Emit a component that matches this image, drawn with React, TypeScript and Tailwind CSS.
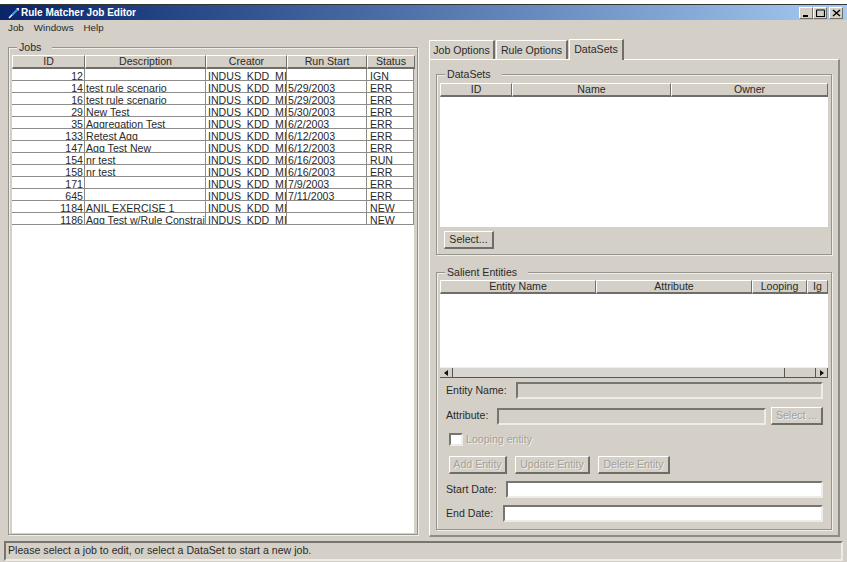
import React from "react";

const jobs = [
  ["12", "", "", "IGN"],
  ["14", "test rule scenario", "5/29/2003", "ERR"],
  ["16", "test rule scenario", "5/29/2003", "ERR"],
  ["29", "New Test", "5/30/2003", "ERR"],
  ["35", "Aggregation Test", "6/2/2003", "ERR"],
  ["133", "Retest Agg", "6/12/2003", "ERR"],
  ["147", "Agg Test New", "6/12/2003", "ERR"],
  ["154", "nr test", "6/16/2003", "RUN"],
  ["158", "nr test", "6/16/2003", "ERR"],
  ["171", "", "7/9/2003", "ERR"],
  ["645", "", "7/11/2003", "ERR"],
  ["1184", "ANIL EXERCISE 1", "", "NEW"],
  ["1186", "Agg Test w/Rule Constraints", "", "NEW"],
];

const raised = "border border-t-white border-l-white border-r-[#6f6d68] border-b-[#6f6d68]";
const sunken = "border-2 border-t-[#77756f] border-l-[#77756f] border-r-[#eeece8] border-b-[#eeece8]";
const dimmed = "text-[#a3a19b] [text-shadow:1px_1px_0_#f0eee8]";

function HeaderCell({ label, width }: { label: string; width: string }) {
  return (
    <div className={`${width} h-[14px] pt-[1px] shrink-0 flex items-center justify-center overflow-hidden whitespace-nowrap ${raised} border-b-2`}>
      {label}
    </div>
  );
}

function Group({ title, className, children }: { title: string; className: string; children: React.ReactNode }) {
  return (
    <fieldset className={`border border-[#96948e] shadow-[inset_1px_1px_0_#f0eee8,1px_1px_0_#f0eee8] min-w-0 ${className}`}>
      <legend className="ml-[5px] pl-[2px] pr-[11px] h-[12px] leading-[12px] bg-[#d4d0c8] text-[#2a2a2a]">{title}</legend>
      {children}
    </fieldset>
  );
}

function Btn({ label, width, disabled }: { label: string; width: string; disabled?: boolean }) {
  return (
    <button className={`${width} h-[18px] flex items-center justify-center shrink-0 ${raised} border-r-2 border-b-2 ${disabled ? dimmed : "text-[#2a2a2a]"}`}>
      {label}
    </button>
  );
}

function Arrow({ dir }: { dir: "left" | "right" }) {
  return (
    <svg width="4" height="6" viewBox="0 0 4 6">
      <path d={dir === "left" ? "M4 0 V6 L0 3 Z" : "M0 0 V6 L4 3 Z"} fill="#111" />
    </svg>
  );
}

export default function App() {
  return (
    <div className="w-[847px] h-[562px] bg-[#d4d0c8] flex flex-col overflow-hidden text-[10.6px] text-[#2a2a2a] font-['Liberation_Sans',Arial,sans-serif]">
      <div className="h-[4px] bg-white shrink-0" />
      <div className="h-[1px] bg-[#333] shrink-0" />
      <div className="h-[15px] shrink-0 flex items-center justify-between bg-gradient-to-r from-[#0a246a] to-[#a6caf0] pl-[8px] pr-[4px]">
        <div className="flex items-center gap-[1px] text-white font-bold text-[10px]">
          <svg width="12" height="12" viewBox="0 0 12 12">
            <path d="M1 11 L6 6" stroke="#ffffff" strokeWidth="1.5" />
            <path d="M4 8 L10 2" stroke="#3f9be8" strokeWidth="2" />
            <path d="M8 1 L11 1 L11 4 Z" fill="#e8e8f0" />
          </svg>
          <span>Rule Matcher Job Editor</span>
        </div>
        <div className="flex items-center">
          {["min", "max", "close"].map((k, i) => (
            <div key={k} className={`w-[14px] h-[12px] bg-[#d4d0c8] flex items-center justify-center ${raised} ${i === 2 ? "ml-[2px]" : ""}`}>
              <svg width="9" height="8" viewBox="0 0 9 8">
                {k === "min" && <path d="M1 7 H6" stroke="#000" strokeWidth="2" />}
                {k === "max" && <path d="M0.5 1 H8.5 M0.5 1 V7.5 H8.5 V1" stroke="#000" fill="none" strokeWidth="1.2" />}
                {k === "close" && <path d="M1 1 L8 7 M8 1 L1 7" stroke="#000" strokeWidth="1.5" />}
              </svg>
            </div>
          ))}
        </div>
      </div>
      <div className="h-[16px] shrink-0 flex items-center gap-[10px] pl-[8px] text-[9.8px]">
        <span>Job</span>
        <span>Windows</span>
        <span>Help</span>
      </div>

      <div className="flex-1 flex min-h-0">
        <Group title="Jobs" className="ml-[8px] mt-[5px] w-[410px] h-[494px] px-[3px] flex flex-col">
          <div className="flex-1 bg-white mt-[2px] mb-[1px] flex flex-col">
            <div className="flex bg-[#d4d0c8]">
              <HeaderCell label="ID" width="w-[73px]" />
              <HeaderCell label="Description" width="w-[121px]" />
              <HeaderCell label="Creator" width="w-[81px]" />
              <HeaderCell label="Run Start" width="w-[80px]" />
              <HeaderCell label="Status" width="w-[48px]" />
            </div>
            {jobs.map((j) => (
              <div key={j[0]} className="flex h-[12px] shrink-0 border-b border-[#8e8c88] leading-[15px] whitespace-nowrap overflow-hidden">
                <div className="w-[73px] shrink-0 text-right pr-[1px] border-r border-[#8e8c88]">{j[0]}</div>
                <div className="w-[121px] shrink-0 pl-[1px] overflow-hidden border-r border-[#8e8c88]">{j[1]}</div>
                <div className="w-[81px] shrink-0 pl-[2px] overflow-hidden border-r border-[#8e8c88] whitespace-pre">INDUS  KDD  MI</div>
                <div className="w-[80px] shrink-0 pl-[1px] border-r border-[#8e8c88]">{j[2]}</div>
                <div className="w-[47px] shrink-0 pl-[3px] border-r border-[#8e8c88]">{j[3]}</div>
              </div>
            ))}
          </div>
        </Group>

        <div className="ml-[11px] mt-[2px] w-[411px] flex flex-col">
          <div className="flex h-[21px] items-end gap-[1px] shrink-0">
            <div className="w-[66px] h-[19px] pt-[1px] flex items-center justify-center border border-t-white border-l-white border-r-2 border-r-[#6f6d68] border-b-0">Job Options</div>
            <div className="w-[72px] h-[19px] pt-[1px] flex items-center justify-center border border-t-white border-l-white border-r-2 border-r-[#6f6d68] border-b-0">Rule Options</div>
            <div className="w-[55px] h-[21px] flex items-center justify-center border border-t-white border-l-white border-r-2 border-r-[#6f6d68] border-b-0 relative z-10 mb-[-1px] bg-[#d4d0c8]">DataSets</div>
          </div>
          <div className="h-[478px] border border-t-white border-l-white border-r-2 border-r-[#8e8c86] border-b-2 border-b-[#8e8c86] px-[6px] pt-[8px] flex flex-col">
            <Group title="DataSets" className="h-[187px] px-[3px] flex flex-col shrink-0">
              <div className="mt-[3px] flex">
                <HeaderCell label="ID" width="w-[72px]" />
                <HeaderCell label="Name" width="w-[159px]" />
                <HeaderCell label="Owner" width="w-[157px]" />
              </div>
              <div className="h-[130px] bg-white shrink-0" />
              <div className="pt-[4px] pl-[4px]">
                <Btn label="Select..." width="w-[50px]" />
              </div>
            </Group>

            <Group title="Salient Entities" className="mt-[11px] h-[264px] px-[3px] flex flex-col shrink-0">
              <div className="mt-[2px] flex">
                <HeaderCell label="Entity Name" width="w-[156px]" />
                <HeaderCell label="Attribute" width="w-[156px]" />
                <HeaderCell label="Looping" width="w-[55px]" />
                <HeaderCell label="Ig" width="w-[21px]" />
              </div>
              <div className="h-[73px] bg-white shrink-0" />
              <div className="h-[11px] bg-[#d8d6d0] flex border-b border-[#555] border-t border-t-[#f0eee8] shrink-0">
                <div className="w-[13px] flex items-center justify-center bg-[#d4d0c8] border-r border-[#555]">
                  <Arrow dir="left" />
                </div>
                <div className="flex-1 border-r border-[#555]" />
                <div className="w-[30px] bg-[#d4d0c8]" />
                <div className="w-[13px] flex items-center justify-center bg-[#d4d0c8] border-r border-l border-[#555]">
                  <Arrow dir="right" />
                </div>
              </div>
              <div className="flex items-center mt-[4px] h-[17px] pl-[6px] pr-[5px] shrink-0">
                <span className="w-[70px] shrink-0">Entity Name:</span>
                <div className={`flex-1 h-full ${sunken}`} />
              </div>
              <div className="flex items-center mt-[8px] h-[18px] pl-[6px] pr-[5px] shrink-0">
                <span className="w-[51px] shrink-0">Attribute:</span>
                <div className={`w-[269px] h-[17px] ${sunken}`} />
                <div className="ml-[5px]">
                  <Btn label="Select ..." width="w-[52px]" disabled />
                </div>
              </div>
              <div className={`flex items-center mt-[8px] h-[13px] pl-[9px] shrink-0 ${dimmed}`}>
                <div className={`w-[14px] h-[13px] shrink-0 bg-white ${sunken}`} />
                <span className="ml-[3px]">Looping entity</span>
              </div>
              <div className="flex items-center gap-[8px] mt-[10px] pl-[9px] shrink-0">
                <Btn label="Add Entity" width="w-[58px]" disabled />
                <Btn label="Update Entity" width="w-[75px]" disabled />
                <Btn label="Delete Entity" width="w-[72px]" disabled />
              </div>
              <div className="flex items-center mt-[7px] h-[17px] pl-[6px] pr-[5px] shrink-0">
                <span className="w-[60px] shrink-0">Start Date:</span>
                <div className={`flex-1 h-full bg-white ${sunken}`} />
              </div>
              <div className="flex items-center mt-[7px] h-[17px] pl-[6px] pr-[5px] shrink-0">
                <span className="w-[57px] shrink-0">End Date:</span>
                <div className={`flex-1 h-full bg-white ${sunken}`} />
              </div>
            </Group>
          </div>
        </div>
      </div>

      <div className={`h-[20px] mx-[4px] mb-[1px] shrink-0 flex items-center pl-[2px] ${sunken}`}>
        Please select a job to edit, or select a DataSet to start a new job.
      </div>
    </div>
  );
}
